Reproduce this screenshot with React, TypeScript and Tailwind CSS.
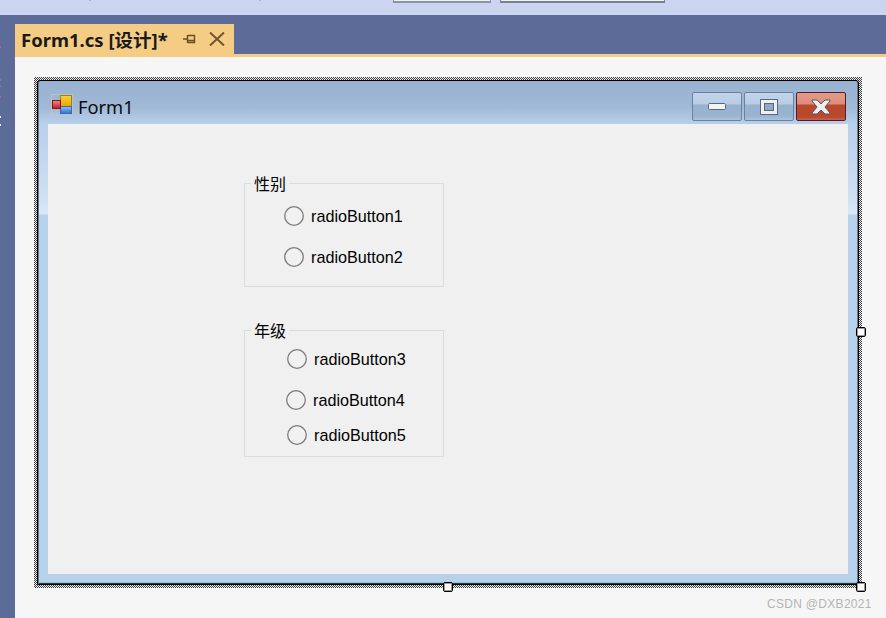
const Radio = ({ label, circleLeft, gap, top }: { label: string; circleLeft: number; gap: number; top: number }) => (
  <div className="flex items-center h-[20px]" style={{ marginLeft: circleLeft, marginTop: top, gap }}>
    <svg width="20" height="20" viewBox="0 0 20 20" className="shrink-0">
      <circle cx="10" cy="10" r="9.3" fill="#f1f1f1" stroke="#7c7c7c" strokeWidth="1.3" />
    </svg>
    <span className="text-[16.2px] leading-[20px] text-black font-['Liberation_Sans',sans-serif] whitespace-nowrap">{label}</span>
  </div>
);

const Group = ({ title, height, top, children }: { title: string; height: number; top: number; children: React.ReactNode }) => (
  <fieldset className="w-[200px] border border-[#dcdcdc] ml-[196px] box-border" style={{ height, marginTop: top }}>
    <legend className="ml-[6px] px-[3px] text-[16px] leading-[22px] text-black font-['Noto_Sans_CJK_SC',sans-serif]">{title}</legend>
    {children}
  </fieldset>
);

const Handle = ({ cls }: { cls: string }) => (
  <span className={"absolute w-[10px] h-[10px] bg-white border border-black rounded-[2px] shadow-[inset_0_0_0_1px_#9a9a9a] " + cls} />
);

const Logo = () => (
  <svg width="22" height="22" viewBox="0 0 22 22" className="shrink-0">
    <rect x="0.5" y="0.5" width="21" height="21" fill="none" stroke="#c2c6cc" strokeWidth="1" opacity="0.7" />
    <defs>
      <linearGradient id="y" x1="0" y1="0" x2="0" y2="1"><stop offset="0" stopColor="#f7d23a" /><stop offset="1" stopColor="#e8a800" /></linearGradient>
      <linearGradient id="b" x1="0" y1="0" x2="0" y2="1"><stop offset="0" stopColor="#93c0f5" /><stop offset="1" stopColor="#2f6fd0" /></linearGradient>
      <linearGradient id="r" x1="0" y1="0" x2="0" y2="1"><stop offset="0" stopColor="#f08a80" /><stop offset="1" stopColor="#c01d1d" /></linearGradient>
    </defs>
    <rect x="9.5" y="1.5" width="11" height="11" fill="url(#y)" stroke="#a97c10" />
    <rect x="9.5" y="12.5" width="11" height="7" fill="url(#b)" stroke="#3a6cb4" />
    <rect x="1.5" y="6.5" width="8" height="8" fill="url(#r)" stroke="#8e1414" />
  </svg>
);

const CaptionButton = ({ kind }: { kind: "min" | "max" | "close" }) => {
  const close = kind === "close";
  return (
    <div
      className={
        "w-[50px] h-[29px] rounded-[2px] border flex items-center justify-center " +
        (close
          ? "border-[#571a28] bg-[linear-gradient(180deg,#e39a88_0,#dd8d7a_11px,#b9492d_12px,#b9482c_24px,#d37a63_29px)]"
          : "border-[#6c819f] bg-[linear-gradient(180deg,#c0d3ea_0,#b9cee6_11px,#98b1ce_12px,#9ab3d0_23px,#b4cbe6_29px)]")
      }
    >
      {kind === "min" && (
        <svg width="18" height="7" viewBox="0 0 18 7">
          <rect x="0.5" y="0.5" width="17" height="6" rx="1" fill="#f2f3f5" stroke="#56677f" />
        </svg>
      )}
      {kind === "max" && (
        <svg width="18" height="16" viewBox="0 0 18 16">
          <rect x="0.5" y="0.5" width="17" height="15" fill="#eef0f2" stroke="#56677f" />
          <rect x="4.5" y="4.5" width="9" height="7" fill="#8fa9c8" stroke="#56677f" />
        </svg>
      )}
      {kind === "close" && (
        <svg width="20" height="16" viewBox="0 0 20 16">
          <path d="M1 1h5l4 4 4-4h5v1l-5 6 5 6v1h-5l-4-4-4 4H1v-1l5-6-5-6z" fill="#eceef0" stroke="#5a5360" strokeWidth="1" />
        </svg>
      )}
    </div>
  );
};

export default function App() {
  return (
    <div className="relative w-[886px] h-[618px] overflow-hidden flex flex-col bg-[#5d6b99] font-['Noto_Sans','Noto_Sans_CJK_SC',sans-serif]">
      {/* toolbar remnant */}
      <div className="h-[15px] bg-[#ccd5f0] flex items-start shrink-0">
        <span className="ml-[89px] w-[2px] h-[1px] bg-[#a8b2d8]" />
        <span className="ml-[168px] w-[2px] h-[1px] bg-[#a8b2d8]" />
        <div className="ml-[132px] w-[98px] h-[3px] bg-[#eef0f5] border-x border-b-2 border-[#8a94a6]" />
        <div className="ml-[9px] w-[165px] h-[3px] bg-[#eef0f5] border-x border-b-2 border-[#78828f]" />
      </div>
      <div className="flex-1 flex min-h-0">
        {/* left dock strip */}
        <div className="w-[15px] shrink-0 flex flex-col items-start pt-[30px]">
          <span className="w-[1px] h-[2px] bg-[#a26c9e] mt-[1px]" />
          <span className="w-[1px] h-[2px] bg-[#a26c9e] mt-[31px]" />
          <span className="w-[1px] h-[2px] bg-[#a26c9e] mt-[4px]" />
          <span className="w-[1px] h-[2px] bg-[#a26c9e] mt-[9px]" />
          <span className="w-[1px] h-[2px] bg-[#f0f0e0] mt-[18px]" />
          <span className="w-[1px] h-[2px] bg-[#f0f0e0] mt-[6px]" />
        </div>
        <div className="flex-1 flex flex-col min-w-0">
          {/* tab strip */}
          <div className="h-[42px] shrink-0 pt-[9px] border-b-[3px] border-[#f5cc84] box-border">
            <div className="w-[219px] h-[30px] bg-[#f5cc84] flex items-center pl-[6px] text-[#1a1a1a]">
              <span className="text-[18.5px] font-bold leading-[30px] whitespace-nowrap w-[146px] pt-[1px]">Form1.cs [设计]*</span>
              <svg width="14" height="14" viewBox="0 0 14 14" className="ml-[15px]">
                <path d="M1 7h5M5.5 3v8M5.5 3.5h7v7h-7M5.5 8.5h7" fill="none" stroke="#6b4c21" strokeWidth="1.4" />
              </svg>
              <svg width="16" height="14" viewBox="0 0 16 14" className="ml-[13px]">
                <path d="M1 0.5l14 13M15 0.5l-14 13" fill="none" stroke="#6f5632" strokeWidth="2" />
              </svg>
            </div>
          </div>
          {/* designer surface */}
          <div className="flex-1 bg-[#f6f6f6] pl-[19px] pt-[20px]">
            <div className="w-[828px] h-[511px] p-[3px] bg-[repeating-conic-gradient(#3a3a3a_0_25%,#f6f6f6_0_50%)] bg-[length:2px_2px]">
              <div className="w-full h-full border border-black rounded-t-[3px] shadow-[inset_1px_0_0_#6a7a8e,inset_-1px_0_0_#6a7a8e] bg-[linear-gradient(180deg,#98b2d1_0,#a0b9d6_26px,#b9d0ea_43px,#bdd3ec_60px,#cfe0f2_115px,#dbe8f6_133px,#b8d1ea_134px,#b8d1ea_calc(100%-2px),#7fcfe0_calc(100%-2px),#7fcfe0_calc(100%-1px),#333_calc(100%-1px))] flex flex-col">
                {/* title bar */}
                <div className="h-[43px] shrink-0 flex items-center pl-[13px] pr-[12px] pt-[5px]">
                  <Logo />
                  <span className="ml-[5px] text-[18.3px] leading-[24px] text-[#0c0c0c] mt-[3px]">Form1</span>
                  <div className="ml-auto flex gap-[2px] self-start mt-[6px]">
                    <CaptionButton kind="min" />
                    <CaptionButton kind="max" />
                    <CaptionButton kind="close" />
                  </div>
                </div>
                {/* client area */}
                <div className="ml-[10px] w-[800px] h-[450px] bg-[#f0f0f0] flex flex-col pt-[1px]">
                  <Group title="性别" height={115} top={47}>
                    <Radio label="radioButton1" circleLeft={39} gap={7} top={12} />
                    <Radio label="radioButton2" circleLeft={39} gap={7} top={21} />
                  </Group>
                  <Group title="年级" height={138} top={32}>
                    <Radio label="radioButton3" circleLeft={42} gap={7} top={8} />
                    <Radio label="radioButton4" circleLeft={41} gap={7} top={21} />
                    <Radio label="radioButton5" circleLeft={42} gap={7} top={15} />
                  </Group>
                </div>
              </div>
            </div>
          </div>
        </div>
      </div>
      <Handle cls="left-[856px] top-[327px]" />
      <Handle cls="left-[443px] top-[582px]" />
      <Handle cls="left-[856px] top-[582px]" />
      <span className="absolute left-[767px] top-[596px] text-[12px] leading-[16px] tracking-[0.3px] text-[#b4b4b4] font-['Liberation_Sans',sans-serif]">CSDN @DXB2021</span>
    </div>
  );
}
